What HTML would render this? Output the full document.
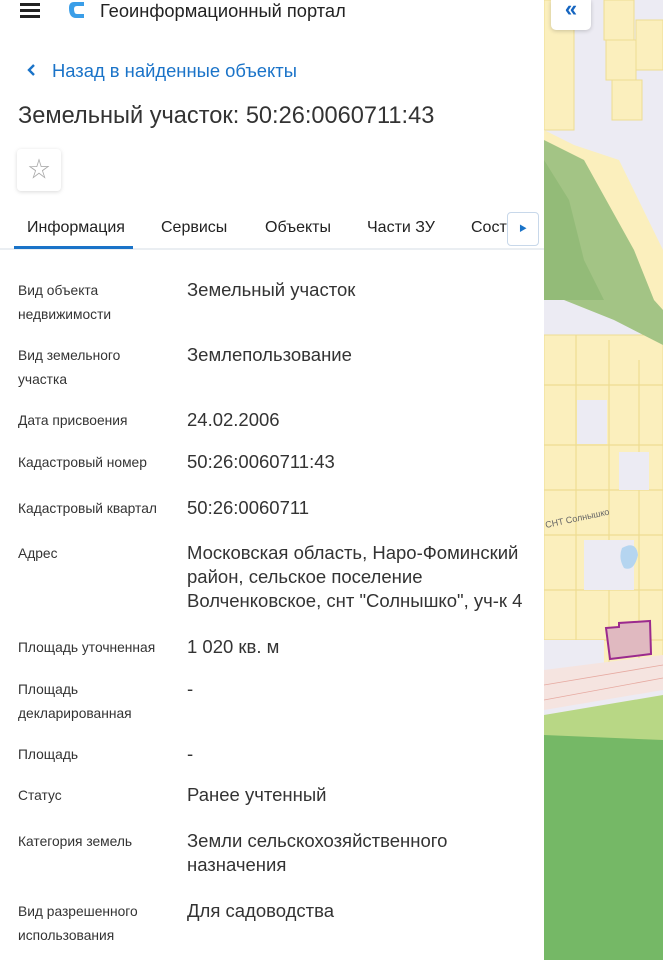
<!DOCTYPE html>
<html><head><meta charset="utf-8"><style>
*{margin:0;padding:0;box-sizing:border-box}
body{width:663px;height:960px;overflow:hidden;background:#fff;font-family:"Liberation Sans","Noto Sans CJK SC",sans-serif;position:relative}
#map{position:absolute;left:544px;top:0;width:119px;height:960px}
#panel{position:absolute;left:0;top:0;width:544px;height:960px;background:#fff}
.t{position:absolute;white-space:nowrap}
.lbl{position:absolute;left:18px;font-size:13.8px;color:#333;line-height:24px}
.val{position:absolute;left:187px;font-size:18.5px;color:#333;line-height:24px;white-space:nowrap}
.tab{position:absolute;top:218px;font-size:16px;color:#222;line-height:20px;white-space:nowrap}
</style></head><body>
<svg id="map" viewBox="0 0 119 960" width="119" height="960">
<rect width="119" height="960" fill="#ecebf3"/>
<g fill="#fbefbd" stroke="#eedc92" stroke-width="1">
<rect x="0" y="0" width="30" height="130"/>
<rect x="60" y="0" width="30" height="40"/><rect x="62" y="40" width="30" height="40"/><rect x="68" y="80" width="30" height="40"/><rect x="92" y="20" width="27" height="50"/>
<rect x="0" y="335" width="119" height="340"/>
</g>
<path d="M0 130 L30 145 L75 160 L119 250 L119 330 L60 300 L0 290 Z" fill="#fbefbd"/>
<path d="M0 140 L40 160 L90 250 L110 300 L119 310 L119 345 L70 320 L20 300 L0 300 Z" fill="#a3c485"/>
<path d="M0 160 L25 200 L40 260 L60 300 L0 300 Z" fill="#93bb78"/>
<g stroke="#eedc92" fill="none" stroke-width="1.2">
<path d="M0 385 H119 M0 445 H119 M0 490 H119 M0 535 H119 M0 590 H119 M0 640 H119"/>
<path d="M32 335 V675 M65 340 V675 M95 360 V675"/>
</g>
<g fill="#ecebf3"><rect x="33" y="400" width="30" height="44"/><rect x="75" y="452" width="30" height="38"/><rect x="40" y="540" width="50" height="50"/><rect x="0" y="640" width="60" height="30"/></g>
<path d="M78 548 Q92 540 94 555 Q90 572 80 568 Q74 558 78 548Z" fill="#b5d5f0"/>
<path d="M62 628 L75 627 L75 623 L106 621 L107 654 L66 659 Z" fill="#e0b9c0" stroke="#9b2a8e" stroke-width="2"/>
<text x="2" y="528" font-size="9" fill="#666" transform="rotate(-12 2 528)" font-family="Liberation Sans,sans-serif">СНТ Солнышко</text>
<path d="M0 670 L119 655 L119 690 L0 710 Z" fill="#f5e4e0"/>
<path d="M0 685 L119 665 M0 700 L119 678" stroke="#e6a9a0" stroke-width="0.8"/>
<path d="M0 715 L119 695 L119 740 L0 745 Z" fill="#b8d785"/>
<path d="M0 735 L119 740 L119 960 L0 960 Z" fill="#75b866"/>
</svg>
<div style="position:absolute;left:551px;top:0;width:40px;height:30px;background:#fff;border-radius:0 0 5px 5px;box-shadow:0 1px 4px rgba(0,0,0,.2);color:#1565c0;font-size:22px;text-align:center;line-height:18px;font-weight:bold">«</div>
<div id="panel">
<div style="position:absolute;left:20px;top:3px;width:20px;height:2.5px;background:#222;box-shadow:0 6px 0 #222,0 12px 0 #222"></div>
<svg style="position:absolute;left:68px;top:0" width="20" height="20" viewBox="0 0 20 20"><path d="M6 2 Q1 2 1 8 Q1 18 8 18 H16 V14 H9 Q6 14 6 9 Q6 6 9 6 H16 V2Z" fill="#3a9ee8"/></svg>
<div class="t" style="left:100px;top:0;font-size:18.3px;color:#222;line-height:22px">Геоинформационный портал</div>
<svg style="position:absolute;left:25px;top:63px" width="12" height="14" viewBox="0 0 12 14"><path d="M9 2 L4 7 L9 12" stroke="#1a73c8" stroke-width="2.4" fill="none"/></svg>
<div class="t" style="left:52px;top:59px;font-size:18.4px;color:#1a73c8;line-height:24px">Назад в найденные объекты</div>
<div class="t" style="left:18px;top:102px;font-size:23.6px;color:#333;line-height:28px">Земельный участок: 50:26:0060711:43</div>
<div style="position:absolute;left:17px;top:149px;width:44px;height:42px;border-radius:4px;box-shadow:0 1px 4px rgba(0,0,0,.15);color:#aaa;font-size:22px;text-align:center;line-height:42px">☆</div>
<div class="tab" style="left:27px">Информация</div>
<div class="tab" style="left:161px">Сервисы</div>
<div class="tab" style="left:265px">Объекты</div>
<div class="tab" style="left:367px">Части ЗУ</div>
<div class="tab" style="left:471px">Сост</div>
<div style="position:absolute;left:507px;top:212px;width:32px;height:34px;background:#fff;border:1px solid #c8d8ea;border-radius:4px;color:#1a73c8;font-size:8px;text-align:center;line-height:32px">▶</div>
<div style="position:absolute;left:0;top:248px;width:544px;height:2px;background:#eaeef2"></div>
<div style="position:absolute;left:14px;top:246px;width:119px;height:3px;background:#1a73c8"></div>
<div class="lbl" style="top:279px">Вид объекта<br>недвижимости</div>
<div class="val" style="top:278px">Земельный участок</div>
<div class="lbl" style="top:344px">Вид земельного<br>участка</div>
<div class="val" style="top:343px">Землепользование</div>
<div class="lbl" style="top:409px">Дата присвоения</div>
<div class="val" style="top:408px">24.02.2006</div>
<div class="lbl" style="top:451px">Кадастровый номер</div>
<div class="val" style="top:450px">50:26:0060711:43</div>
<div class="lbl" style="top:497px">Кадастровый квартал</div>
<div class="val" style="top:496px">50:26:0060711</div>
<div class="lbl" style="top:542px">Адрес</div>
<div class="val" style="top:541px">Московская область, Наро-Фоминский<br>район, сельское поселение<br>Волченковское, снт "Солнышко", уч-к 4</div>
<div class="lbl" style="top:636px">Площадь уточненная</div>
<div class="val" style="top:635px">1 020 кв. м</div>
<div class="lbl" style="top:678px">Площадь<br>декларированная</div>
<div class="val" style="top:677px">-</div>
<div class="lbl" style="top:743px">Площадь</div>
<div class="val" style="top:742px">-</div>
<div class="lbl" style="top:784px">Статус</div>
<div class="val" style="top:783px">Ранее учтенный</div>
<div class="lbl" style="top:830px">Категория земель</div>
<div class="val" style="top:829px">Земли сельскохозяйственного<br>назначения</div>
<div class="lbl" style="top:900px">Вид разрешенного<br>использования</div>
<div class="val" style="top:899px">Для садоводства</div>
</div>
</body></html>
